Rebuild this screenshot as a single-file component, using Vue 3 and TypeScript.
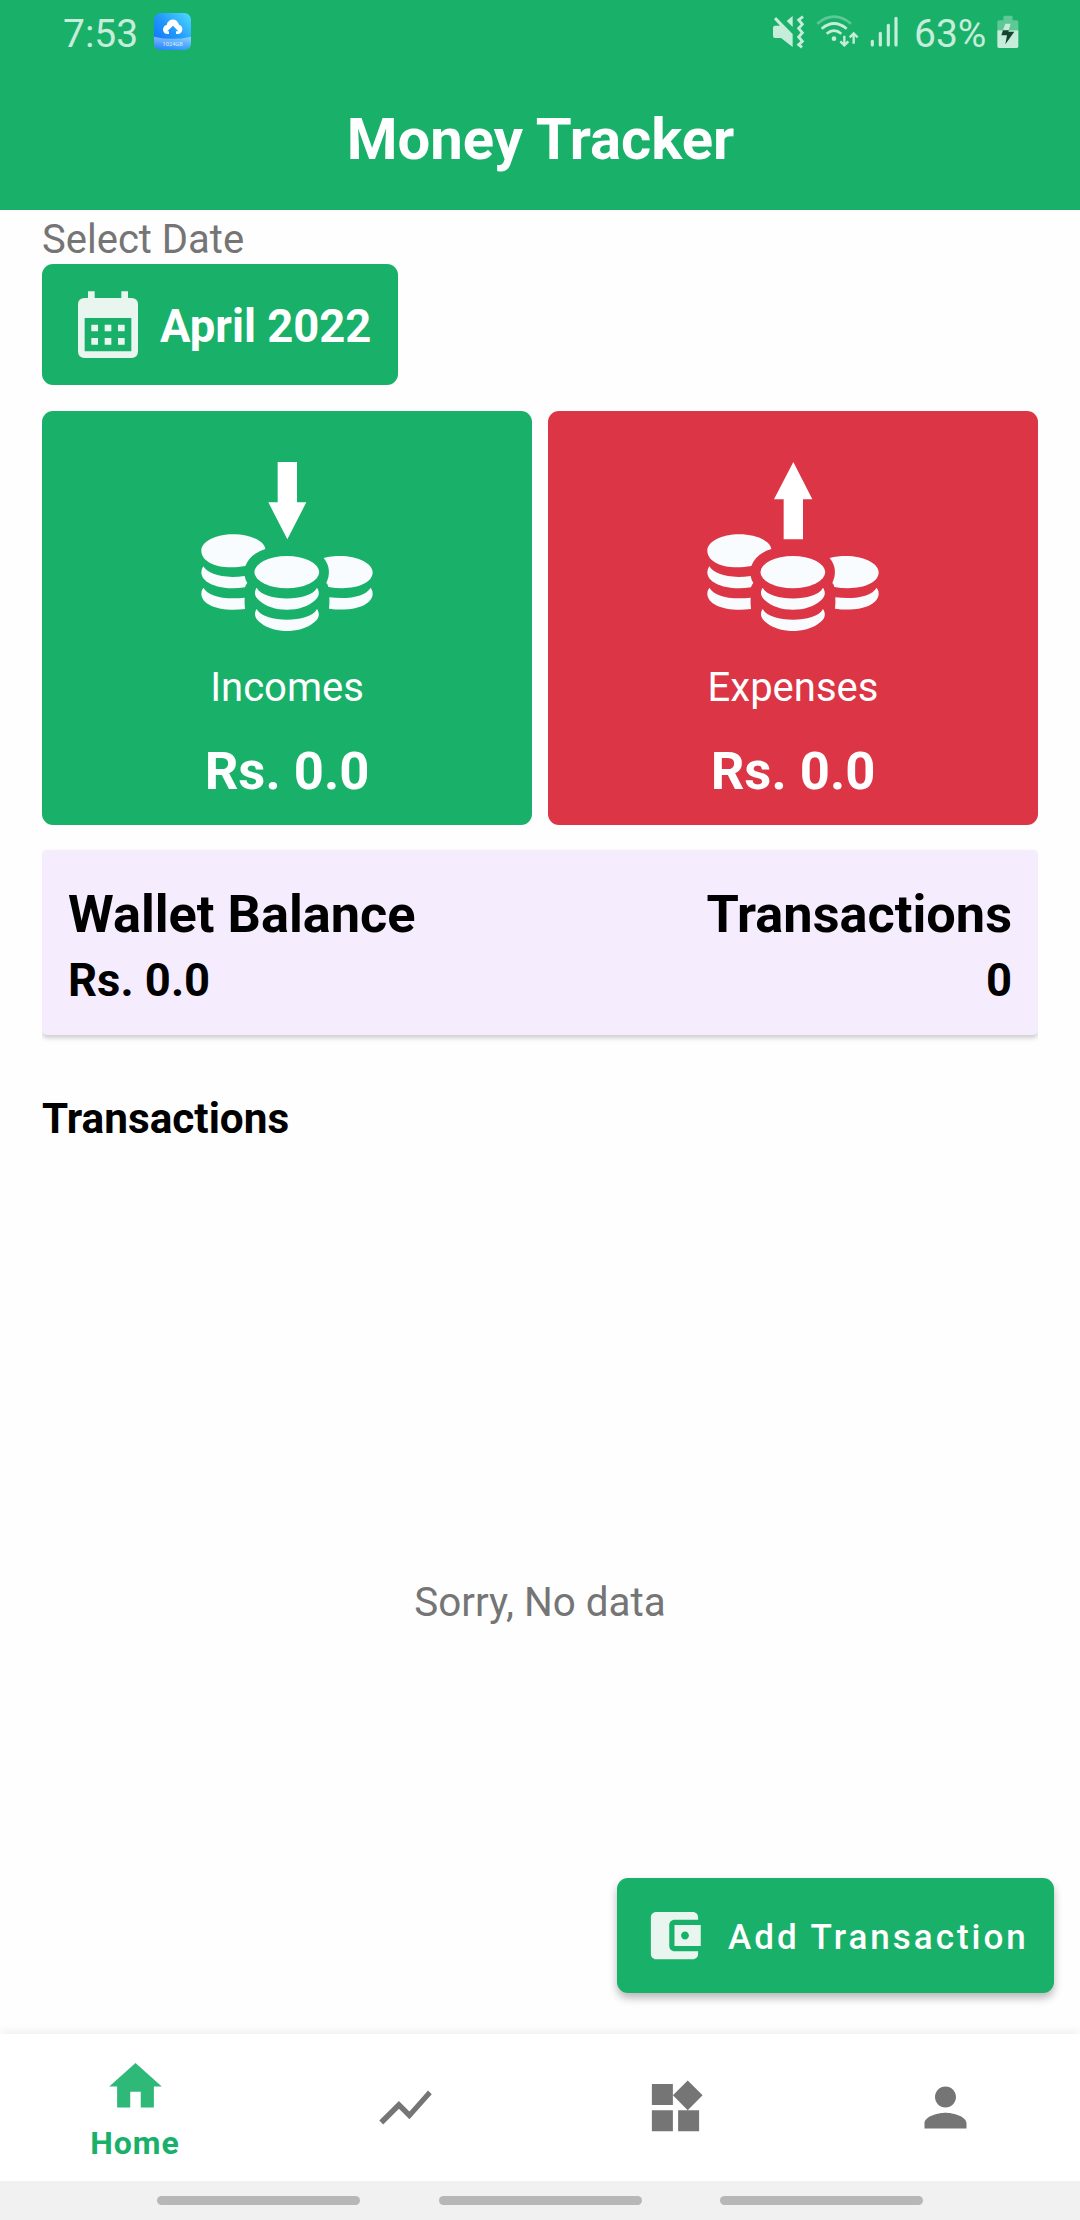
<script setup lang="ts">
interface Summary {
  label: string
  amount: string
  kind: 'income' | 'expense'
  arrow: string
}

interface Tab {
  label: string
  path: string
  active: boolean
}

const summaries: Summary[] = [
  {
    label: 'Incomes',
    amount: 'Rs. 0.0',
    kind: 'income',
    arrow: 'M292 66H350V187H378L321 298L264 187H292Z',
  },
  {
    label: 'Expenses',
    amount: 'Rs. 0.0',
    kind: 'expense',
    arrow: 'M321 66L378 178H350V298H292V178H263Z',
  },
]

const coins: string[] = [
  'M195 378C120 392 63 368 63 332C63 305 106 283 159 283C210 283 252 303 255 327Q209 341 195 378Z',
  'M69 379C83 402 127 417 193 408Q195 420 201 429Q196 434 194 442C122 453 63 431 63 397Q63 387 69 379Z',
  'M69 443C83 467 127 480 193 473Q192 490 194 507C122 516 63 496 63 461Q63 451 69 443Z',
  'M229 443C250 486 390 486 410 443C418 455 418 468 405 480C365 519 275 519 235 480C222 468 221 455 229 443Z',
  'M229 507C250 550 390 550 410 507C418 519 418 532 405 544C365 583 275 583 235 544C222 532 221 519 229 507Z',
  'M430 354C502 336 577 362 577 397C577 434 514 453 444 441Q443 433 438 429C450 404 449 377 430 354Z',
  'M571 443C556 468 510 479 447 472Q448 490 446 506C520 517 577 494 577 461Q577 451 571 443Z',
]

const tabs: Tab[] = [
  { label: 'Home', path: 'M10 20v-6h4v6h5v-8h3L12 3 2 12h3v8z', active: true },
  {
    label: 'Stats',
    path: 'M3.5 18.49l6-6.01 4 4L22 6.92l-1.41-1.41-7.09 7.97-4-4L2 16.99z',
    active: false,
  },
  {
    label: 'Categories',
    path: 'M13 13v8h8v-8h-8zM3 21h8v-8H3v8zM3 3v8h8V3H3zm13.66-1.31L11 7.34 16.66 13l5.66-5.66-5.66-5.65z',
    active: false,
  },
  {
    label: 'Profile',
    path: 'M12 12c2.21 0 4-1.79 4-4s-1.79-4-4-4-4 1.79-4 4 1.79 4 4 4zm0 2c-2.67 0-8 1.34-8 4v2h16v-2c0-2.66-5.33-4-8-4z',
    active: false,
  },
]
</script>

<template>
  <div class="screen">
    <header class="header">
      <div class="status">
        <span class="clock">7:53</span>
        <svg class="app-badge" viewBox="0 0 111 111">
          <defs>
            <linearGradient id="sky" x1="0" y1="1" x2="1" y2="0">
              <stop offset="0" stop-color="#0a6dff" />
              <stop offset="0.5" stop-color="#2196fb" />
              <stop offset="1" stop-color="#4fdcff" />
            </linearGradient>
            <linearGradient id="band" x1="0" y1="0" x2="0" y2="1">
              <stop offset="0" stop-color="#fff" stop-opacity="0.45" />
              <stop offset="1" stop-color="#fff" stop-opacity="0.1" />
            </linearGradient>
          </defs>
          <rect width="111" height="111" rx="20" fill="url(#sky)" />
          <path d="M0 71Q55 84 111 71V91Q111 111 91 111H20Q0 111 0 91Z" fill="url(#band)" />
          <path
            d="M45 63H41C23 63 23 38 38 36C42 14 70 14 75 35C90 38 88 63 71 63H66V55H73L57 38L40 55H45Z"
            fill="#fff"
          />
          <text x="56" y="99" text-anchor="middle" class="badge-text">1024GB</text>
        </svg>
        <div class="status-icons">
          <svg width="33" height="34" viewBox="94 44 99 102">
            <path d="M97 82Q97 76 103 76H118L100 57L106 50L156 101V140L121 113H103Q97 113 97 107Z" fill="currentColor" />
            <path d="M138 62L156 47V80Z" fill="currentColor" />
            <path d="M187 49L174 59L185 72L174 84L185 97L174 110L185 123L174 133L184 141" fill="none" stroke="currentColor" stroke-width="8.5" />
          </svg>
          <svg width="43" height="34" viewBox="226 44 129 102">
            <g fill="none" stroke="currentColor" stroke-width="8">
              <path d="M230 70Q280 28 331 70" opacity="0.4" />
              <path d="M243 85Q280 54 318 85" />
              <path d="M258 100Q280 82 302 100" />
              <path d="M311 106V134M299 123L311 135L323 123M339 130V100M327 111L339 99L351 111" stroke-width="7" />
            </g>
            <circle cx="280" cy="115" r="7" fill="currentColor" />
          </svg>
          <svg width="29" height="34" viewBox="385 44 87 102">
            <path d="M392 123V134M416 99V134M440 75V134M463 54V134" stroke="currentColor" stroke-width="9.5" stroke-linecap="round" />
          </svg>
        </div>
        <span class="battery-level">63%</span>
        <svg class="battery" width="22" height="34" viewBox="770 44 66 102">
          <path d="M789 60V51Q789 46 794 46H812Q817 46 817 51V60H829Q834 60 834 65V90H771V65Q771 60 776 60Z" fill="currentColor" opacity="0.4" />
          <path d="M771 90H834V138Q834 143 829 143H776Q771 143 771 138Z" fill="currentColor" />
          <path d="M795 70H811L805 90H788Z" fill="currentColor" />
          <path d="M788 90H806L804 94H822L795 132L800 105H783Z" fill="#15452f" />
        </svg>
      </div>
      <h1 class="title">Money Tracker</h1>
    </header>

    <main class="content">
      <div class="date-label">Select Date</div>
      <button class="date-button">
        <svg class="calendar" viewBox="0 0 24 24">
          <path
            fill-rule="evenodd"
            d="M6 1H8V3H16V1H18V3H19Q21 3 21 5V19Q21 21 19 21H5Q3 21 3 19V5Q3 3 5 3H6ZM5 9V19H19V9ZM7 11H9V13H7ZM11 11H13V13H11ZM15 11H17V13H15ZM7 15H9V17H7ZM11 15H13V17H11ZM15 15H17V17H15Z"
          />
        </svg>
        <span class="date-text">April 2022</span>
      </button>

      <section class="cards">
        <article v-for="s in summaries" :key="s.label" class="card" :class="s.kind">
          <svg class="coins" viewBox="62 66 516 507">
            <path :d="s.arrow" fill="#fff" />
            <g fill="#f8fcfe">
              <path v-for="c in coins" :key="c" :d="c" />
              <ellipse cx="319.5" cy="396.5" rx="97" ry="48.5" />
            </g>
          </svg>
          <span class="card-label">{{ s.label }}</span>
          <strong class="card-amount">{{ s.amount }}</strong>
        </article>
      </section>

      <section class="wallet">
        <div class="wallet-col">
          <span class="wallet-title">Wallet Balance</span>
          <span class="wallet-value">Rs. 0.0</span>
        </div>
        <div class="wallet-col end">
          <span class="wallet-title">Transactions</span>
          <span class="wallet-value">0</span>
        </div>
      </section>

      <h2 class="section-title">Transactions</h2>
      <div class="empty">Sorry, No data</div>

      <button class="add">
        <svg class="add-icon" viewBox="0 0 24 24">
          <path
            d="M21 18v1c0 1.1-.9 2-2 2H5c-1.11 0-2-.9-2-2V5c0-1.1.89-2 2-2h14c1.1 0 2 .9 2 2v1h-9c-1.11 0-2 .9-2 2v8c0 1.1.89 2 2 2h9zm-9-2h10V8H12v8zm4-2.5c-.83 0-1.5-.67-1.5-1.5s.67-1.5 1.5-1.5 1.5.67 1.5 1.5-.67 1.5-1.5 1.5z"
          />
        </svg>
        <span class="add-text">Add Transaction</span>
      </button>
    </main>

    <nav class="tabs">
      <a v-for="t in tabs" :key="t.label" class="tab" :class="{ active: t.active }" :aria-label="t.label">
        <svg class="tab-icon" viewBox="0 0 24 24"><path :d="t.path" /></svg>
        <span v-if="t.active" class="tab-label">{{ t.label }}</span>
      </a>
    </nav>

    <footer class="gestures">
      <i v-for="n in 3" :key="n" class="pill"></i>
    </footer>
  </div>
</template>

<style>
body {
  margin: 0;
  background: #fefefe;
}
</style>

<style scoped>
.screen {
  display: flex;
  flex-direction: column;
  width: 1080px;
  height: 2220px;
  overflow: hidden;
  background: #fefefe;
  font-family: Roboto, 'Liberation Sans', sans-serif;
}

.header {
  flex: none;
  height: 210px;
  background: #19b169;
  color: #fff;
}

.status {
  display: flex;
  align-items: center;
  height: 68px;
  padding: 0 61px 0 63px;
  box-sizing: border-box;
  color: #c6ecda;
  font-size: 39px;
  line-height: 46px;
}

.clock {
  width: 91px;
}

.app-badge {
  width: 37px;
  height: 37px;
  margin-top: -5px;
}

.badge-text {
  fill: #d8eeff;
  font-size: 17px;
  font-family: Roboto, sans-serif;
}

.status-icons {
  display: flex;
  gap: 11px;
  margin-left: auto;
  margin-right: 15px;
  margin-top: -5px;
}

.battery-level {
  width: 83px;
}

.battery {
  margin-top: -5px;
}

.title {
  margin: 0;
  height: 142px;
  line-height: 142px;
  text-align: center;
  text-indent: 1px;
  font-size: 58px;
  font-weight: 700;
}

.content {
  position: relative;
  flex: 1;
  display: flex;
  flex-direction: column;
  padding: 5px 42px 0;
}

.date-label {
  height: 49px;
  line-height: 50px;
  font-size: 40px;
  color: #757575;
}

.date-button {
  display: flex;
  align-items: center;
  align-self: flex-start;
  width: 356px;
  height: 121px;
  box-sizing: border-box;
  padding: 6px 0 0 26px;
  border: 0;
  border-radius: 11px;
  background: #19b169;
  color: #fff;
  font: 700 45.4px Roboto, sans-serif;
  white-space: nowrap;
}

.date-text {
  margin-bottom: 2px;
}

.calendar {
  flex: none;
  width: 80px;
  height: 80px;
  margin-right: 12px;
  fill: #e8f6ef;
}

.cards {
  display: flex;
  gap: 16px;
  margin-top: 26px;
}

.card {
  flex: 1;
  display: flex;
  flex-direction: column;
  align-items: center;
  height: 414px;
  box-sizing: border-box;
  padding-top: 51px;
  border-radius: 11px;
  color: #fff;
}

.income {
  background: #19b169;
}

.expense {
  background: #dc3545;
}

.coins {
  width: 172px;
  height: 169px;
}

.card-label {
  margin-top: 32px;
  font-size: 40px;
  line-height: 50px;
}

.card-amount {
  margin-top: 28px;
  font-size: 52.6px;
  line-height: 60px;
}

.wallet {
  display: flex;
  justify-content: space-between;
  height: 185px;
  box-sizing: border-box;
  margin-top: 25px;
  padding: 34px 26px 0;
  border-radius: 5px;
  background: #f5ecfe;
  box-shadow: 0 3px 5px rgba(0, 0, 0, 0.2);
  clip-path: inset(-2px 0 -12px 0);
  color: #000;
  font-weight: 700;
}

.wallet-col {
  display: flex;
  flex-direction: column;
}

.end {
  align-items: flex-end;
}

.wallet-title {
  font-size: 52.3px;
  line-height: 60px;
}

.wallet-value {
  margin-top: 10px;
  font-size: 45.4px;
  line-height: 54px;
}

.section-title {
  margin: 59px 0 0;
  font-size: 42.3px;
  line-height: 50px;
  font-weight: 700;
  color: #000;
}

.empty {
  flex: 1;
  display: flex;
  align-items: center;
  justify-content: center;
  padding-top: 27px;
  font-size: 40.4px;
  color: #757575;
}

.add {
  position: absolute;
  right: 26px;
  bottom: 41px;
  display: flex;
  align-items: center;
  width: 437px;
  height: 115px;
  padding: 0 0 0 26px;
  border: 0;
  border-radius: 11px;
  background: #19b169;
  box-shadow: 0 5px 8px rgba(0, 0, 0, 0.28);
  color: #fff;
  font: 500 35px Roboto, sans-serif;
  letter-spacing: 3px;
  white-space: nowrap;
}

.add-text {
  margin-top: 3px;
}

.add-icon {
  flex: none;
  width: 63px;
  height: 63px;
  margin-right: 22px;
  fill: #e8f6ef;
}

.tabs {
  position: relative;
  flex: none;
  display: flex;
  height: 147px;
  background: #fff;
  box-shadow: 0 -2px 10px rgba(0, 0, 0, 0.07);
}

.tab {
  flex: 1;
  display: flex;
  flex-direction: column;
  align-items: center;
  justify-content: center;
}

.active {
  padding-top: 2px;
}

.tab-icon {
  width: 63px;
  height: 63px;
  fill: #757575;
}

.active .tab-icon {
  fill: #2fb978;
}

.tab-label {
  margin-top: 6px;
  font-size: 32px;
  line-height: 38px;
  font-weight: 700;
  letter-spacing: 0.9px;
  color: #19b169;
}

.gestures {
  position: relative;
  flex: none;
  display: flex;
  justify-content: center;
  gap: 78.5px;
  height: 39px;
  box-sizing: border-box;
  padding-top: 15px;
  background: #f1f1f1;
}

.pill {
  width: 203px;
  height: 9px;
  border-radius: 5px;
  background: #b7b7b7;
}
</style>
